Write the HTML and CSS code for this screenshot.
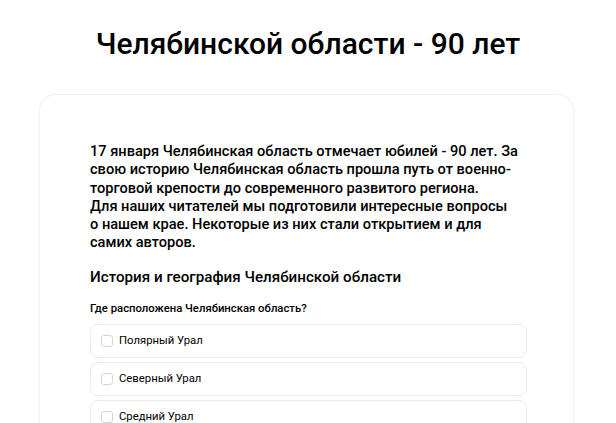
FILE: index.html
```html
<!DOCTYPE html>
<html lang="ru">
<head>
<meta charset="utf-8">
<link rel="stylesheet" href="styles.css">
</head>
<body>
<header class="page-head">
  <h1 class="title">Челябинской области - 90 лет</h1>
</header>
<main class="card">
  <p class="intro">17 января Челябинская область отмечает юбилей - 90 лет. За<br>свою историю Челябинская область прошла путь от военно-<br>торговой крепости до современного развитого региона.<br>Для наших читателей мы подготовили интересные вопросы<br>о нашем крае. Некоторые из них стали открытием и для<br>самих авторов.</p>
  <h2 class="section">История и география Челябинской области</h2>
  <div class="question">
    <div class="q-label">Где расположена Челябинская область?</div>
    <div class="options">
      <label class="option"><span class="box"></span><span class="opt-text">Полярный Урал</span></label>
      <label class="option"><span class="box"></span><span class="opt-text">Северный Урал</span></label>
      <label class="option"><span class="box"></span><span class="opt-text">Средний Урал</span></label>
    </div>
  </div>
</main>
</body>
</html>
```

FILE: styles.css
```css
* { box-sizing: border-box; }
html, body { margin: 0; padding: 0; background: #fff; }
body {
  font-family: Roboto, "Noto Sans", sans-serif;
  color: #000;
  overflow: hidden;
  height: 423px;
}
.page-head {
  padding-top: 22px;
  height: 95px;
  text-align: center;
}
.title {
  margin: 0;
  font-size: 30px;
  font-weight: 500;
  line-height: 44px;
}
.card {
  width: 533px;
  margin-left: 40px;
  border-radius: 16px;
  box-shadow: 0 0 0 1px #f2f2f2, 0 1px 4px rgba(0,0,0,0.04);
  padding: 47px 49px 30px 50px;
  height: 400px;
}
.intro {
  margin: 0;
  font-size: 14.6px;
  font-weight: 500;
  line-height: 18.3px;
  white-space: nowrap;
}
.section {
  margin: 14px 0 0;
  font-size: 15.2px;
  font-weight: 500;
  line-height: 22px;
}
.q-label {
  margin-top: 13px;
  font-size: 11.3px;
  font-weight: 500;
  line-height: 16px;
}
.options {
  margin-top: 7px;
  display: flex;
  flex-direction: column;
  gap: 4px;
}
.option {
  display: flex;
  align-items: center;
  height: 34px;
  border: 1px solid #ebebeb;
  border-radius: 8px;
  padding-left: 10px;
  width: 437px;
}
.box {
  width: 12px;
  height: 12px;
  border: 1px solid #d6d6d6;
  border-radius: 3px;
  margin-right: 6px;
}
.opt-text {
  font-size: 11.3px;
  line-height: 16px;
}
```
